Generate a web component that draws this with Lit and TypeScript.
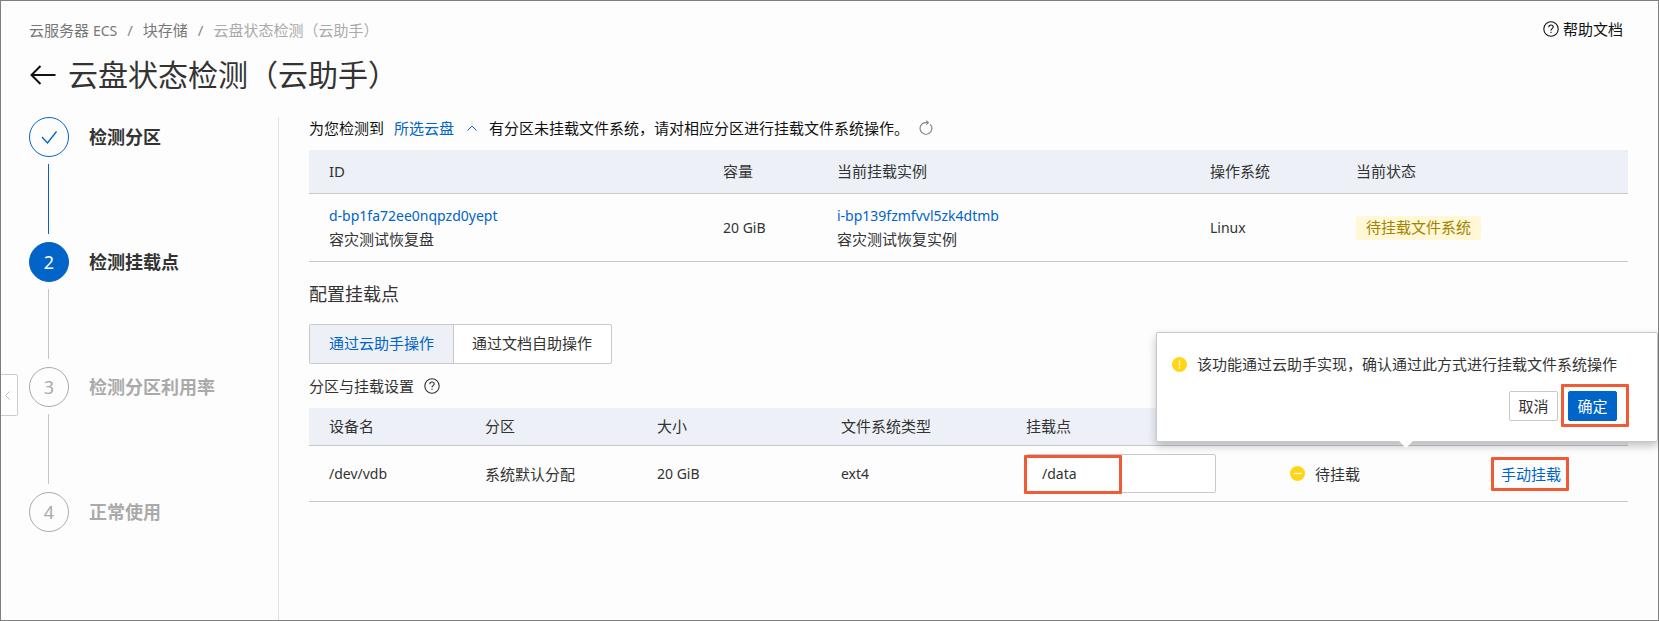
import { LitElement, html, css } from "lit";
import { customElement, property, state } from "lit/decorators.js";

type StepState = "done" | "active" | "waiting";

interface Step {
  label: string;
  state: StepState;
}

const STEPS: Step[] = [
  { label: "检测分区", state: "done" },
  { label: "检测挂载点", state: "active" },
  { label: "检测分区利用率", state: "waiting" },
  { label: "正常使用", state: "waiting" },
];

const helpIcon = html`
  <svg width="16" height="16" viewBox="0 0 16 16" fill="none" stroke="currentColor" stroke-width="1.1" aria-hidden="true">
    <circle cx="8" cy="8" r="7.2" />
    <path d="M5.800 6.300c0-1.500 1-2.300 2.200-2.300s2.200.8 2.200 2c0 1.700-2.200 1.700-2.200 3.500" />
    <path d="M8 10.700v1.300" />
  </svg>
`;

@customElement("step-list")
export class StepList extends LitElement {
  @property({ attribute: false }) steps: Step[] = [];

  static styles = css`
    :host {
      display: block;
    }
    .steps {
      margin: 0;
      padding: 0;
      list-style: none;
    }
    .step {
      display: grid;
      grid-template-columns: 40px 1fr;
      column-gap: 20px;
      color: #aaa;
    }
    .marker {
      box-sizing: border-box;
      width: 40px;
      height: 40px;
      border: 1px solid #aaa;
      border-radius: 50%;
      display: flex;
      align-items: center;
      justify-content: center;
      font-size: 18px;
      line-height: 24px;
    }
    .label {
      font-size: 18px;
      font-weight: 700;
      line-height: 40px;
      white-space: nowrap;
    }
    .line {
      width: 1px;
      height: 70px;
      margin: 7px 0 8px 19px;
      background: #c4c4c4;
    }
    .done .marker {
      border-color: #0064c8;
      color: #0064c8;
    }
    .done .line {
      background: #0064c8;
    }
    .active .marker {
      border-color: #0064c8;
      background: #0064c8;
      color: #fff;
    }
    .done .label,
    .active .label {
      color: #333;
    }
  `;

  render() {
    const last = this.steps.length - 1;
    return html`
      <ol class="steps">
        ${this.steps.map(
          (step, i) => html`
            <li class="step ${step.state}">
              <span class="marker">
                ${step.state === "done"
                  ? html`<svg width="18" height="16" viewBox="0 0 18 16" fill="none" stroke="currentColor" stroke-width="1.3" aria-hidden="true">
                      <path d="M2 8l5.500 6L16.500 2.500" />
                    </svg>`
                  : i + 1}
              </span>
              <span class="label">${step.label}</span>
              ${i < last ? html`<span class="line"></span>` : ""}
            </li>
          `
        )}
      </ol>
    `;
  }
}

@customElement("confirm-popover")
export class ConfirmPopover extends LitElement {
  @property() message = "";

  static styles = css`
    :host {
      display: block;
    }
    .box {
      position: relative;
      box-sizing: border-box;
      width: 502px;
      padding: 20px 40px 20px 15px;
      border: 1px solid #c8c8c8;
      border-radius: 2px;
      background: #fff;
      box-shadow: 0 4px 8px rgba(0, 0, 0, 0.24);
      color: #333;
      text-align: left;
    }
    .message {
      display: flex;
      align-items: center;
      gap: 10px;
      margin: 0;
      font-size: 15px;
      line-height: 22px;
      white-space: nowrap;
    }
    .message svg {
      flex: none;
    }
    .actions {
      display: flex;
      justify-content: flex-end;
      gap: 10px;
      margin-top: 16px;
    }
    .btn {
      box-sizing: border-box;
      height: 30px;
      width: 49px;
      padding: 0;
      border: 1px solid #c8c8c8;
      border-radius: 2px;
      background: #fff;
      color: #333;
      font: inherit;
      font-size: 15px;
      line-height: 28px;
      cursor: pointer;
    }
    .primary {
      border-color: #0064c8;
      background: #0064c8;
      color: #fff;
    }
    .marked {
      position: relative;
      display: flex;
    }
    .marked::after {
      content: "";
      position: absolute;
      inset: -7px -12px -6px -7px;
      border: 3px solid #f25a35;
      border-radius: 1px;
      pointer-events: none;
    }
    .tip {
      position: absolute;
      top: 100%;
      right: 243px;
      width: 16px;
      height: 8px;
    }
    .tip svg {
      display: block;
    }
  `;

  private answer(type: string) {
    this.dispatchEvent(new CustomEvent(type));
  }

  render() {
    return html`
      <div class="box" role="dialog" aria-label=${this.message}>
        <p class="message">
          <svg width="15" height="15" viewBox="0 0 15 15" aria-hidden="true">
            <circle cx="7.5" cy="7.5" r="7.5" fill="#ffd616" />
            <path d="M7.500 3.500v5.300M7.500 10v1.500" stroke="#fff" stroke-width="1.2" />
          </svg>
          <span>${this.message}</span>
        </p>
        <div class="actions">
          <button class="btn" type="button" @click=${() => this.answer("cancel")}>取消</button>
          <span class="marked">
            <button class="btn primary" type="button" @click=${() => this.answer("confirm")}>确定</button>
          </span>
        </div>
        <span class="tip">
          <svg width="16" height="8" viewBox="0 0 16 8" aria-hidden="true">
            <path d="M0 -1H16L8 7z" fill="#fff" />
          </svg>
        </span>
      </div>
    `;
  }
}

@customElement("app-root")
export class AppRoot extends LitElement {
  @state() private tab = 0;
  @state() private confirming = true;
  @state() private mountPoint = "/data";

  static styles = css`
    :host {
      display: block;
      font-family: "Noto Sans", "Noto Sans CJK SC", sans-serif;
      font-size: 15px;
      line-height: 22px;
      color: #333;
    }
    .page {
      position: relative;
      box-sizing: border-box;
      min-height: 100vh;
      padding: 16px 30px 0 28px;
      border: 1px solid #7f7f7f;
      background: #fdfdfd;
      display: flex;
      flex-direction: column;
    }
    a {
      color: #0064c8;
      text-decoration: none;
    }
    .latin {
      font-size: 14px;
    }
    .top {
      display: flex;
      justify-content: space-between;
      align-items: center;
    }
    .crumbs {
      display: flex;
      gap: 10px;
      padding-top: 2px;
      color: #888;
    }
    .crumbs a {
      color: #777;
    }
    .crumbs .current {
      color: #aaa;
    }
    .help {
      display: flex;
      align-items: center;
      gap: 4px;
      margin-right: 5px;
      padding-bottom: 2px;
      color: #111;
    }
    .heading {
      display: flex;
      align-items: center;
      gap: 11px;
      margin: 13px 0 22px;
    }
    .back {
      display: flex;
      padding: 0;
      border: 0;
      background: none;
      color: #111;
      cursor: pointer;
    }
    .title {
      margin: 0;
      font-size: 30px;
      font-weight: 400;
      line-height: 40px;
    }
    .body {
      flex: 1;
      display: grid;
      grid-template-columns: 249px minmax(0, 1fr);
    }
    .main {
      padding-left: 30px;
      border-left: 1px solid #e2e2e2;
    }
    .notice {
      display: flex;
      align-items: center;
      margin: 0 0 11px;
      color: #111;
    }
    .chooser {
      display: flex;
      align-items: center;
      gap: 13px;
      margin: 0 12px 0 10px;
    }
    .refresh {
      display: flex;
      margin-left: 10px;
      padding: 0;
      border: 0;
      background: none;
      color: #888;
      cursor: pointer;
    }
    .grid {
      width: 100%;
      table-layout: fixed;
      border-collapse: separate;
      border-spacing: 0;
    }
    .grid th,
    .grid td {
      padding: 0 0 0 20px;
      border-bottom: 1px solid #c8c8c8;
      text-align: left;
      font-weight: 400;
      white-space: nowrap;
    }
    .grid thead th,
    .grid thead td {
      padding-bottom: 2px;
      background: #edf1f7;
    }
    .disk thead th {
      height: 41px;
    }
    .disk tbody td {
      height: 67px;
    }
    .mounts thead th {
      height: 35px;
    }
    .mounts tbody td {
      height: 55px;
    }
    .pair {
      display: grid;
      grid-auto-rows: 23px;
      align-items: center;
    }
    .tag {
      display: inline-block;
      padding: 0 10px 2px;
      border-radius: 2px;
      background: #fff7d6;
      color: #a08400;
    }
    .section {
      margin: 20px 0 18px;
      font-size: 18px;
      font-weight: 400;
      line-height: 24px;
    }
    .tabs {
      display: inline-flex;
      border: 1px solid #c8c8c8;
      border-radius: 2px;
      background: #fff;
    }
    .tab {
      padding: 7px 19px 9px;
      border: 0;
      background: none;
      color: #333;
      font: inherit;
      cursor: pointer;
    }
    .tab + .tab {
      border-left: 1px solid #c8c8c8;
      padding-left: 18px;
    }
    .tab.selected {
      background: #edf1f7;
      color: #0064c8;
    }
    .caption {
      display: flex;
      align-items: center;
      gap: 10px;
      margin: 11px 0;
    }
    .field {
      position: relative;
      display: block;
      width: 190px;
    }
    .input {
      display: block;
      box-sizing: border-box;
      width: 100%;
      height: 39px;
      padding: 0 15px;
      border: 1px solid #c8c8c8;
      border-radius: 2px;
      background: #fff;
      color: #333;
      font: inherit;
      font-size: 14px;
      outline: none;
    }
    .field::after,
    .action::after {
      content: "";
      position: absolute;
      border: 3px solid #f25a35;
      border-radius: 1px;
      pointer-events: none;
    }
    .field::after {
      inset: 1px 94px -1px -2px;
    }
    .status {
      display: flex;
      align-items: center;
      gap: 10px;
    }
    .action {
      position: relative;
      display: inline-block;
    }
    .action::after {
      inset: -6px -8px -6px -10px;
    }
    .anchor {
      position: relative;
    }
    .popover {
      position: absolute;
      right: -30px;
      bottom: 59px;
    }
    .collapse {
      position: absolute;
      left: 0;
      top: 373px;
      display: flex;
      align-items: center;
      justify-content: center;
      box-sizing: border-box;
      width: 17px;
      height: 42px;
      padding: 0 4px 0 0;
      border: 1px solid #ccc;
      border-left: 0;
      border-radius: 0 2px 2px 0;
      background: #fff;
      color: #bbb;
      cursor: pointer;
    }
    .w-id { width: 394px; }
    .w-size { width: 114px; }
    .w-instance { width: 373px; }
    .w-os { width: 146px; }
    .w-state { width: 292px; }
    .w-device { width: 156px; }
    .w-part { width: 172px; }
    .w-capacity { width: 184px; }
    .w-fs { width: 185px; }
    .w-mount { width: 264px; }
    .w-status { width: 211px; }
    .w-action { width: 147px; }
  `;

  private renderDiskTable() {
    return html`
      <table class="grid disk">
        <colgroup>
          <col class="w-id" /><col class="w-size" /><col class="w-instance" /><col class="w-os" /><col class="w-state" />
        </colgroup>
        <thead>
          <tr>
            <th scope="col">ID</th>
            <th scope="col">容量</th>
            <th scope="col">当前挂载实例</th>
            <th scope="col">操作系统</th>
            <th scope="col">当前状态</th>
          </tr>
        </thead>
        <tbody>
          <tr>
            <td>
              <div class="pair">
                <a class="latin" href="#disk">d-bp1fa72ee0nqpzd0yept</a>
                <span>容灾测试恢复盘</span>
              </div>
            </td>
            <td class="latin">20 GiB</td>
            <td>
              <div class="pair">
                <a class="latin" href="#instance">i-bp139fzmfvvl5zk4dtmb</a>
                <span>容灾测试恢复实例</span>
              </div>
            </td>
            <td class="latin">Linux</td>
            <td><span class="tag">待挂载文件系统</span></td>
          </tr>
        </tbody>
      </table>
    `;
  }

  private renderMountTable() {
    return html`
      <table class="grid mounts">
        <colgroup>
          <col class="w-device" /><col class="w-part" /><col class="w-capacity" /><col class="w-fs" />
          <col class="w-mount" /><col class="w-status" /><col class="w-action" />
        </colgroup>
        <thead>
          <tr>
            <th scope="col">设备名</th>
            <th scope="col">分区</th>
            <th scope="col">大小</th>
            <th scope="col">文件系统类型</th>
            <th scope="col" id="mount-label">挂载点</th>
            <td></td>
            <td></td>
          </tr>
        </thead>
        <tbody>
          <tr>
            <td class="latin">/dev/vdb</td>
            <td>系统默认分配</td>
            <td class="latin">20 GiB</td>
            <td class="latin">ext4</td>
            <td>
              <span class="field">
                <input
                  class="input"
                  type="text"
                  aria-labelledby="mount-label"
                  .value=${this.mountPoint}
                  @input=${(e: Event) => (this.mountPoint = (e.target as HTMLInputElement).value)}
                />
              </span>
            </td>
            <td>
              <span class="status">
                <svg width="15" height="15" viewBox="0 0 15 15" aria-hidden="true">
                  <circle cx="7.5" cy="7.5" r="7.5" fill="#ffd616" />
                  <path d="M3.500 7.500h8" stroke="#fff" stroke-width="1.2" />
                </svg>
                待挂载
              </span>
            </td>
            <td class="anchor">
              <a
                class="action"
                href="#mount"
                @click=${(e: Event) => {
                  e.preventDefault();
                  this.confirming = true;
                }}
                >手动挂载</a
              >
              ${this.confirming
                ? html`<confirm-popover
                    class="popover"
                    message="该功能通过云助手实现，确认通过此方式进行挂载文件系统操作"
                    @cancel=${() => (this.confirming = false)}
                    @confirm=${() => (this.confirming = false)}
                  ></confirm-popover>`
                : ""}
            </td>
          </tr>
        </tbody>
      </table>
    `;
  }

  render() {
    return html`
      <div class="page">
        <header>
          <div class="top">
            <nav class="crumbs">
              <a href="#ecs">云服务器 <span class="latin">ECS</span></a>
              <span>/</span>
              <a href="#storage">块存储</a>
              <span>/</span>
              <span class="current">云盘状态检测（云助手）</span>
            </nav>
            <a class="help" href="#help">${helpIcon}帮助文档</a>
          </div>
          <div class="heading">
            <button class="back" type="button" aria-label="返回">
              <svg width="28" height="24" viewBox="0 0 28 24" fill="none" stroke="currentColor" stroke-width="2" aria-hidden="true">
                <path d="M2.500 12H26.500M11.500 3L2.500 12l9 9" />
              </svg>
            </button>
            <h1 class="title">云盘状态检测（云助手）</h1>
          </div>
        </header>
        <div class="body">
          <step-list .steps=${STEPS}></step-list>
          <main class="main">
            <p class="notice">
              为您检测到
              <a class="chooser" href="#disks">
                所选云盘
                <svg width="10" height="6" viewBox="0 0 10 6" fill="none" stroke="currentColor" aria-hidden="true">
                  <path d="M.5 5.500L5 1l4.500 4.500" />
                </svg>
              </a>
              有分区未挂载文件系统，请对相应分区进行挂载文件系统操作。
              <button class="refresh" type="button" aria-label="刷新">
                <svg width="14" height="16" viewBox="0 0 14 16" fill="none" stroke="currentColor" stroke-width="1.2" aria-hidden="true">
                  <path d="M11.300 4.300A5.900 5.900 0 1 1 5.500 2.600H9" />
                  <path d="M7.300.6L9.300 2.600L7.300 4.600" />
                </svg>
              </button>
            </p>
            ${this.renderDiskTable()}
            <h2 class="section">配置挂载点</h2>
            <div class="tabs" role="tablist">
              ${["通过云助手操作", "通过文档自助操作"].map(
                (name, i) => html`
                  <button
                    class="tab ${this.tab === i ? "selected" : ""}"
                    type="button"
                    role="tab"
                    aria-selected=${this.tab === i}
                    @click=${() => (this.tab = i)}
                  >
                    ${name}
                  </button>
                `
              )}
            </div>
            <div class="caption">分区与挂载设置 ${helpIcon}</div>
            ${this.renderMountTable()}
          </main>
        </div>
        <button class="collapse" type="button" aria-label="收起">
          <svg width="5" height="9" viewBox="0 0 5 9" fill="none" stroke="currentColor" aria-hidden="true">
            <path d="M4.500 .5l-4 4 4 4" />
          </svg>
        </button>
      </div>
    `;
  }
}
